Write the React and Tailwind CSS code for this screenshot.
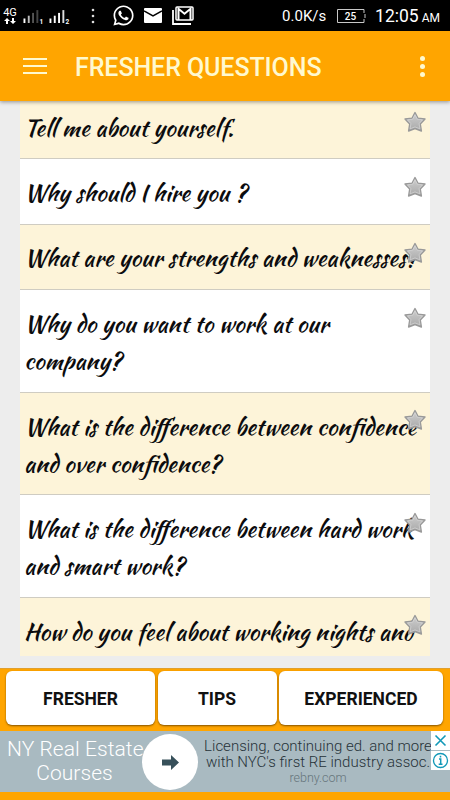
import React from 'react';
import { FaWhatsapp } from 'react-icons/fa';

const questions = [
  { height: 'h-[58px] -mt-px', pad: 'pt-[8px]', star: 'top-[10px]', tint: true, lines: ['Tell me about yourself.'] },
  { height: 'h-[66px]', pad: 'pt-[15px]', star: 'top-[17px]', lines: ['Why should I hire you ?'] },
  { height: 'h-[65px]', pad: 'pt-[14px]', star: 'top-[17px]', tint: true, lines: ['What are your strengths and weaknesses?'] },
  { height: 'h-[103px]', pad: 'pt-[15px]', star: 'top-[17px]', lines: ['Why do you want to work at our', 'company?'] },
  { height: 'h-[102px]', pad: 'pt-[15px]', star: 'top-[16px]', tint: true, lines: ['What is the difference between confidence', 'and over confidence?'] },
  { height: 'h-[103px]', pad: 'pt-[15px]', star: 'top-[17px]', lines: ['What is the difference between hard work', 'and smart work?'] },
  { height: 'h-[59px]', pad: 'pt-[15px]', star: 'top-[16px]', tint: true, last: true, lines: ['How do you feel about working nights and'] },
];

function Star() {
  return (
    <svg viewBox="0 0 22 22" className="h-[22px] w-[22px]">
      <defs>
        <linearGradient id="silver" x1="0" y1="0" x2="0" y2="1">
          <stop offset="0" stopColor="#d0d0d0" />
          <stop offset="1" stopColor="#a8a8a8" />
        </linearGradient>
      </defs>
      <path d="M11 1.500l3 5.800 7 .7-4.700 5 1.100 7-6.400-2.500L4.600 20l1.100-7L1 8l7-.7z" fill="url(#silver)" stroke="#999" strokeWidth="1.400" strokeLinejoin="round" />
      <path d="M11 3.700l2.400 4.500 5.200.6-3.500 3.800.8 5.200-4.900-1.900-4.900 1.900.8-5.200-3.500-3.800 5.200-.6z" fill="none" stroke="#dcdcdc" strokeWidth=".6" strokeLinejoin="round" />
    </svg>
  );
}

function Signal({ sim, levels }) {
  return (
    <svg viewBox="0 0 21 18" className="h-[18px] w-[21px]">
      {levels.map((color, i) => (
        <rect key={i} x={i * 4.300 + 0.500} y={11.500 - i * 2.800} width="1.900" height={4.500 + i * 2.800} fill={color} />
      ))}
      <text x="16.500" y="17" fill="#fff" fontSize="6.500" fontWeight="700" fontFamily="Roboto">{sim}</text>
    </svg>
  );
}

function StatusBar() {
  return (
    <div className="flex h-[31px] shrink-0 items-center bg-black text-white">
      <div className="ml-[3px] flex w-[14px] flex-col items-center">
        <span className="text-[11px] leading-[10px]">4G</span>
        <svg viewBox="0 0 12 6" className="h-[6px] w-[12px]" fill="#fff">
          <path d="M3 0L0 3h2v3h2V3h2zM9 6l3-3h-2V0H8v3H6z" />
        </svg>
      </div>
      <div className="ml-[6px] flex gap-[5px]">
        <Signal sim="1" levels={['#fff', '#bbb', '#555', '#444']} />
        <Signal sim="2" levels={['#fff', '#fff', '#fff', '#ddd']} />
      </div>
      <svg viewBox="0 0 4 16" className="ml-[21px] h-[16px] w-[4px]" fill="#ddd">
        <circle cx="2" cy="2" r="1.300" />
        <circle cx="2" cy="8" r="1.300" />
        <circle cx="2" cy="14" r="1.300" />
      </svg>
      <FaWhatsapp className="ml-[17px] h-[23px] w-[23px]" />
      <svg viewBox="0 0 18 15" className="ml-[9px] h-[15px] w-[18px]">
        <rect width="18" height="15" rx="1" fill="#fff" />
        <path d="M0 3l9 5 9-5" fill="none" stroke="#000" strokeWidth="1.500" />
      </svg>
      <svg viewBox="0 0 22 19" className="ml-[10px] h-[19px] w-[22px]">
        <path d="M1 4v14h18" fill="none" stroke="#fff" strokeWidth="1.800" />
        <rect x="4" y="1" width="17" height="13" rx="1" fill="none" stroke="#fff" strokeWidth="1.500" />
        <path d="M6.500 14V2.800l6 5 6-5V14" fill="none" stroke="#fff" strokeWidth="2" />
      </svg>
      <div className="ml-auto flex items-center">
        <span className="mt-[2px] w-[44px] whitespace-nowrap text-[15px]">0.0K/s</span>
        <svg viewBox="0 0 29 14" className="ml-[11px] h-[14px] w-[29px]">
          <path d="M27 4V.5H.5v13H27V10M28 5v4" fill="none" stroke="#c8c8c8" />
          <text x="13.500" y="10.500" fill="#fff" fontSize="10" fontWeight="500" fontFamily="Roboto" textAnchor="middle">25</text>
        </svg>
        <span className="ml-[9px] mt-[2px] text-[17.5px]">12:05</span>
        <span className="ml-[3px] mr-[10px] mt-[5px] text-[12px]">AM</span>
      </div>
    </div>
  );
}

function Header() {
  return (
    <div className="relative z-10 flex h-[70px] shrink-0 items-center bg-[#ffa500] shadow-[0_1px_4px_rgba(0,0,0,0.4)]">
      <div className="ml-[23px] flex w-[24px] flex-col gap-[5px]">
        <span className="h-[2px] bg-[#fff9cf]" />
        <span className="h-[2px] bg-[#fff9cf]" />
        <span className="h-[2px] bg-[#fff9cf]" />
      </div>
      <h1 className="ml-[28px] mt-[3px] whitespace-nowrap text-[25px] font-medium tracking-[-0.080px] text-[#fff9cf]">FRESHER QUESTIONS</h1>
      <div className="ml-auto mr-[25px] flex flex-col gap-[3px]">
        <span className="h-[5px] w-[5px] rounded-full bg-[#fff9cf]" />
        <span className="h-[5px] w-[5px] rounded-full bg-[#fff9cf]" />
        <span className="h-[5px] w-[5px] rounded-full bg-[#fff9cf]" />
      </div>
    </div>
  );
}

function Question({ item }) {
  return (
    <li className={`relative shrink-0 overflow-hidden pl-[4px] ${item.height} ${item.pad} ${item.tint ? 'bg-[#fdf4d9]' : 'bg-white'} ${item.last ? '' : 'border-b border-[#cfccc2]'}`}>
      {item.lines.map((line) => (
        <p key={line} className="whitespace-nowrap font-['Kaushan_Script',Lato,cursive] text-[23.75px] leading-[37px] text-[#0c0c0e]">
          {line}
        </p>
      ))}
      <div className={`absolute right-[4px] ${item.star}`}>
        <Star />
      </div>
    </li>
  );
}

function Ad() {
  return (
    <div className="relative flex h-[61px] shrink-0 bg-[#a9bac1] font-light">
      <div className="w-[142px] whitespace-nowrap pl-[7px] pt-[6px] text-center text-[21px] leading-[24px] tracking-[0.050px] text-white">
        <p>NY Real Estate</p>
        <p>Courses</p>
      </div>
      <div className="z-10 mt-[3px] flex h-[56px] w-[56px] shrink-0 items-center justify-center rounded-full bg-white">
        <svg viewBox="0 0 17 15" className="h-[15px] w-[17px]" fill="#37505a">
          <path d="M0 4.500h9V0l8 7.500L9 15v-4.500H0z" />
        </svg>
      </div>
      <div className="ml-[5px] w-[230px] whitespace-nowrap pt-[7px] text-center text-[15px] leading-[16px] text-[#263238]">
        <p>Licensing, continuing ed. and more</p>
        <p>with NYC's first RE industry assoc.</p>
        <p className="text-[12.5px] leading-[15px] text-[#66757b]">rebny.com</p>
      </div>
      <div className="absolute right-0 top-0 flex w-[19px] flex-col gap-px">
        <svg viewBox="0 0 19 19" className="h-[19px] w-[19px] bg-white">
          <path d="M4.500 4.500l10 10M14.500 4.500l-10 10" stroke="#1399b8" strokeWidth="1.600" />
        </svg>
        <svg viewBox="0 0 19 19" className="h-[19px] w-[19px] bg-white" fill="none" stroke="#1399b8">
          <circle cx="9.500" cy="9.500" r="7" strokeWidth="1.300" />
          <path d="M8 8h1.700v5M7.700 13.300h3.800M9.500 4.800v1.700" strokeWidth="1.500" />
        </svg>
      </div>
    </div>
  );
}

function Tab({ label, width }) {
  return (
    <button className={`h-[54px] rounded-[6px] bg-white pt-[3px] text-[17.5px] font-bold text-[#111] shadow-[0_1px_2px_rgba(80,50,0,0.7)] ${width}`}>
      {label}
    </button>
  );
}

function App() {
  return (
    <main className="flex h-[800px] w-[450px] flex-col overflow-hidden bg-[#ededed] font-[Roboto,sans-serif]">
      <StatusBar />
      <Header />
      <ul className="mx-[20px] flex h-[555px] shrink-0 flex-col overflow-hidden pt-px">
        {questions.map((item) => (
          <Question key={item.lines[0]} item={item} />
        ))}
      </ul>
      <div className="mt-[12px] flex h-[63px] shrink-0 gap-[2.500px] border-t border-[#e0a030] bg-[#ffa500] pl-[6px] pt-[2px]">
        <Tab label="FRESHER" width="w-[149px]" />
        <Tab label="TIPS" width="w-[119px]" />
        <Tab label="EXPERIENCED" width="w-[164px]" />
      </div>
      <Ad />
      <div className="h-[8px] bg-[#ffa500]" />
    </main>
  );
}

export default App;
